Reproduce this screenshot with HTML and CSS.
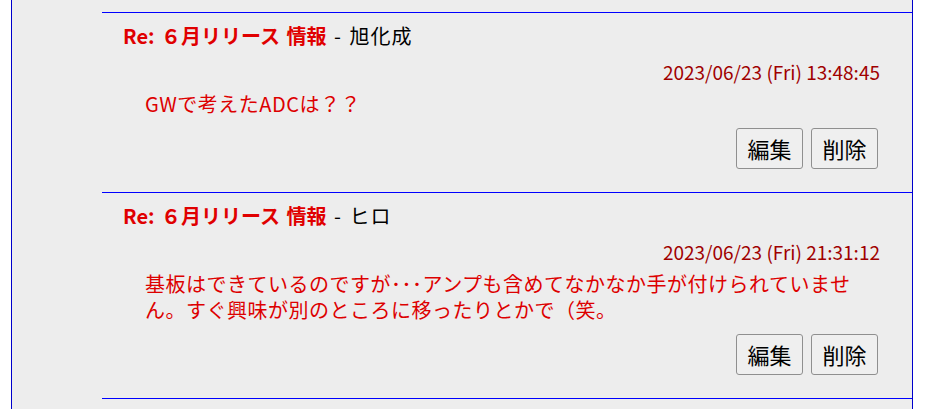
FILE: index.html
```html
<!DOCTYPE html>
<html lang="ja">
<head>
<meta charset="utf-8">
<title>掲示板</title>
<link rel="stylesheet" href="styles.css">
</head>
<body>
<div class="panel">
  <ul class="posts">
    <li class="post">
      <div class="title"><span class="subject">Re: ６月リリース 情報</span><span class="author"> - 旭化成</span></div>
      <div class="date">2023/06/23 (Fri) 13:48:45</div>
      <div class="body">GWで考えたADCは？？</div>
      <div class="actions"><button class="btn">編集</button><button class="btn">削除</button></div>
    </li>
    <li class="post">
      <div class="title"><span class="subject">Re: ６月リリース 情報</span><span class="author"> - ヒロ</span></div>
      <div class="date">2023/06/23 (Fri) 21:31:12</div>
      <div class="body">基板はできているのですが･･･アンプも含めてなかなか手が付けられていません。すぐ興味が別のところに移ったりとかで（笑。</div>
      <div class="actions"><button class="btn">編集</button><button class="btn">削除</button></div>
    </li>
  </ul>
</div>
</body>
</html>
```
FILE: styles.css
```css
html, body {
  margin: 0;
  padding: 0;
  background: #ffffff;
  height: 100%;
  overflow: hidden;
}
body {
  font-family: "Noto Sans CJK JP", "Noto Sans", sans-serif;
}
.panel {
  margin-left: 11px;
  width: 902px;
  box-sizing: border-box;
  min-height: 100%;
  background: #ededed;
  border-left: 1px solid #0000cc;
  border-right: 1px solid #0000cc;
  padding-top: 12px;
}
.posts {
  list-style: none;
  margin: 0 0 0 90px;
  padding: 0;
}
.post {
  border-top: 1px solid #0000ff;
  padding: 11px 32px 23px 21px;
}
.post:last-child {
  border-bottom: 1px solid #0000ff;
}
.title {
  font-size: 20px;
  height: 24px;
  line-height: 24px;
  white-space: nowrap;
}
.subject {
  color: #e00000;
  font-weight: bold;
  word-spacing: 2px;
}
.author {
  color: #000000;
  font-weight: normal;
  word-spacing: 2px;
  letter-spacing: 1px;
}
.date {
  margin-top: 12px;
  height: 24px;
  text-align: right;
  color: #a00000;
  font-size: 19px;
  line-height: 24px;
}
.body {
  margin-top: 7px;
  padding-left: 22px;
  width: 715px;
  color: #dd0000;
  font-size: 20px;
  line-height: 26px;
  letter-spacing: 0.5px;
}
.actions {
  margin-top: 11px;
  height: 41px;
  display: flex;
  justify-content: flex-end;
  gap: 8px;
  padding-right: 2px;
}
.btn {
  box-sizing: border-box;
  height: 41px;
  width: 67px;
  font-family: "Noto Sans CJK JP", sans-serif;
  font-size: 22px;
  line-height: 27px;
  padding: 0;
  margin: 0;
  color: #000000;
  background: #efefef;
  border: 1px solid #8f8f8f;
  border-radius: 3px;
}
```
